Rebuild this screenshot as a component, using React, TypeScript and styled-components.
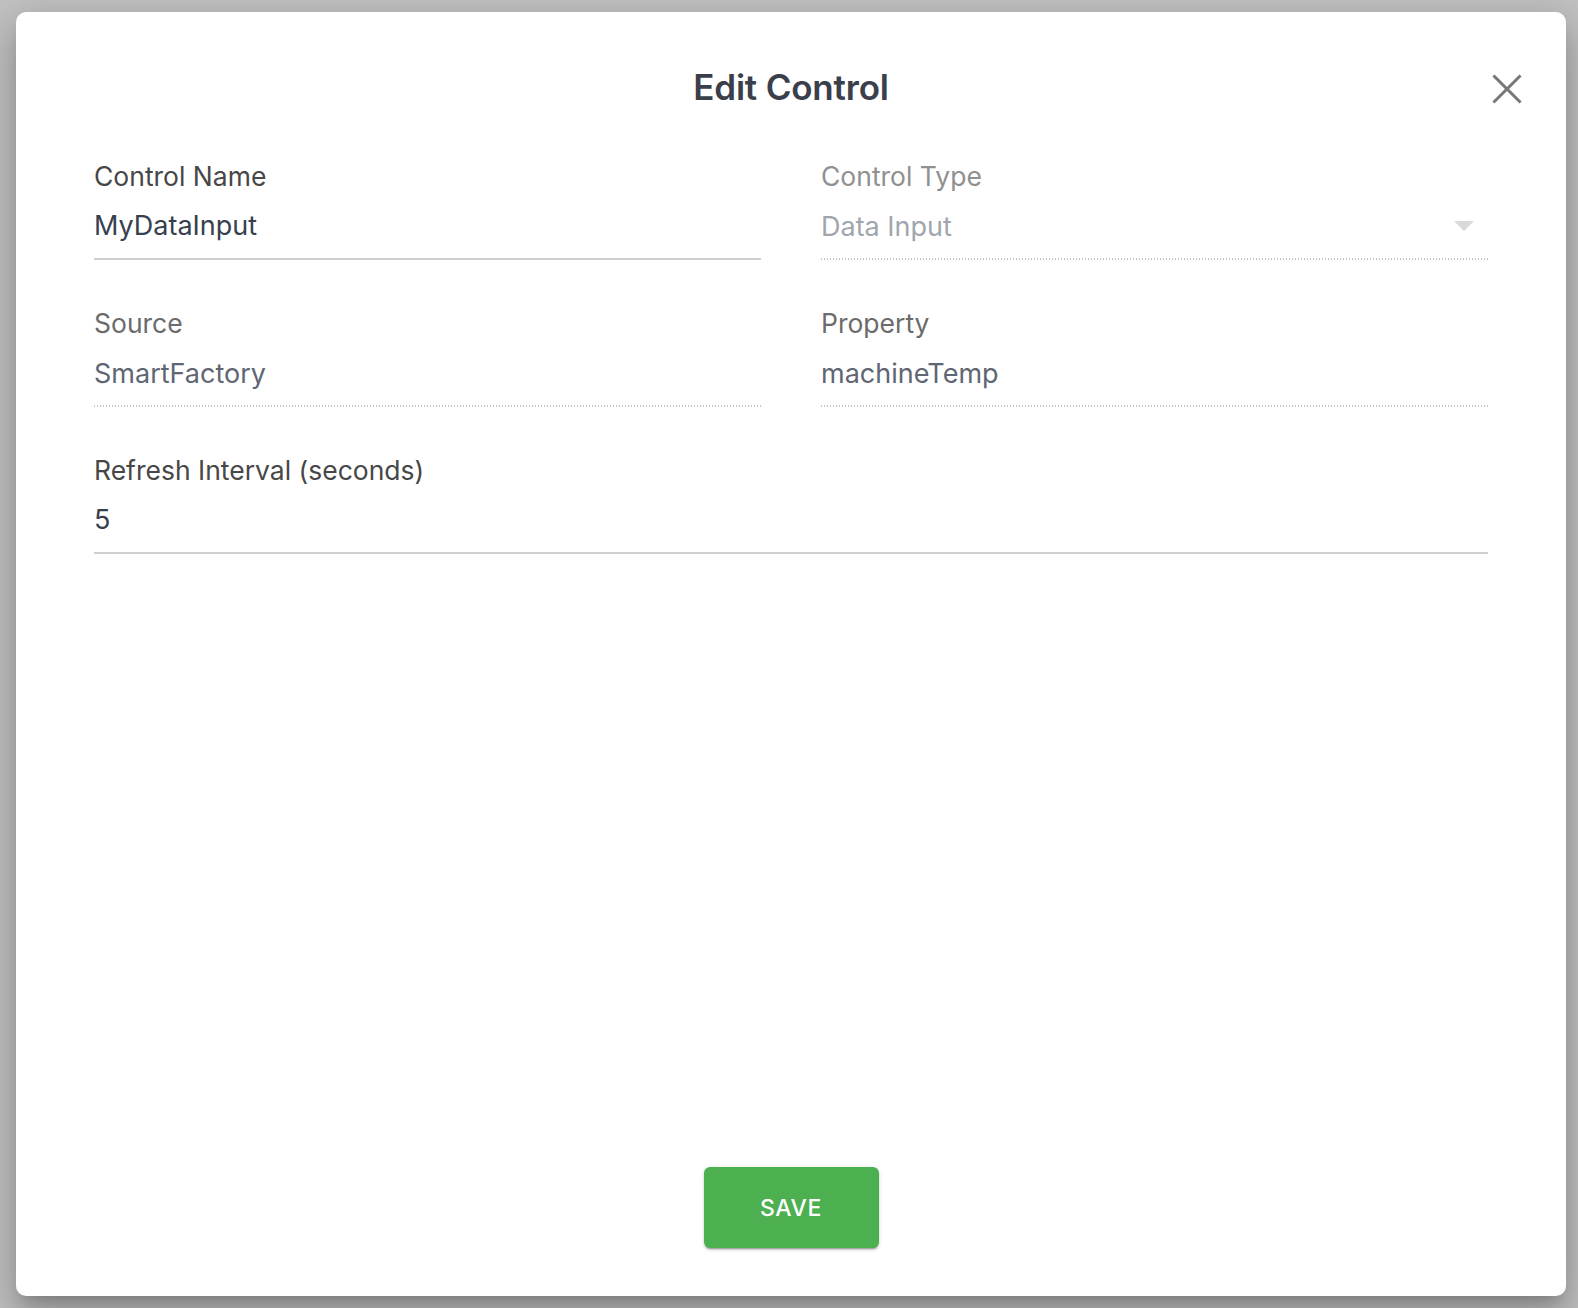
import React from 'react';
import styled, { createGlobalStyle } from 'styled-components';

const GlobalStyle = createGlobalStyle`
  html, body {
    margin: 0;
    height: 100%;
    background: #c2c2c2;
  }
  body {
    font-family: Inter, "Noto Sans", "Liberation Sans", sans-serif;
  }
  * {
    box-sizing: border-box;
  }
`;

const Dialog = styled.div`
  display: flex;
  flex-direction: column;
  height: calc(100vh - 24px);
  margin: 12px 12px 12px 16px;
  padding: 55px 0 48px;
  background: #fff;
  border-radius: 10px;
  box-shadow: 0 11px 15px -7px rgba(0, 0, 0, 0.2),
    0 24px 38px 3px rgba(0, 0, 0, 0.14),
    0 9px 46px 8px rgba(0, 0, 0, 0.12);
`;

const Header = styled.div`
  display: grid;
  grid-template-columns: 1fr auto 1fr;
  align-items: center;
  padding: 0 44px;
  height: 40px;
`;

const Title = styled.h2`
  grid-column: 2;
  margin: 0;
  font-size: 35px;
  line-height: 40px;
  font-weight: 600;
  color: #3a3f4b;
  letter-spacing: -0.2px;
`;

const CloseButton = styled.button`
  grid-column: 3;
  justify-self: end;
  display: flex;
  margin-top: 4px;
  padding: 0;
  border: none;
  background: none;
  cursor: pointer;
`;

const Form = styled.div`
  display: grid;
  grid-template-columns: 1fr 1fr;
  column-gap: 60px;
  row-gap: 47px;
  padding: 53px 78px 0;
`;

const Field = styled.div<{ $wide?: boolean }>`
  display: flex;
  flex-direction: column;
  grid-column: ${(p) => (p.$wide ? '1 / -1' : 'auto')};
`;

const Label = styled.label<{ $tone: 'active' | 'muted' | 'faint' }>`
  font-size: 26.5px;
  line-height: 32px;
  margin-bottom: 18px;
  color: ${(p) =>
    p.$tone === 'active' ? '#474747' : p.$tone === 'muted' ? '#6b6b6b' : '#909090'};
`;

const InputRow = styled.div<{ $disabled?: boolean }>`
  position: relative;
  display: flex;
  align-items: center;
  height: 50px;
  padding-bottom: 16px;
  border-bottom: ${(p) => (p.$disabled ? 'none' : '2px solid #cfcfcf')};
  background-image: ${(p) =>
    p.$disabled
      ? 'repeating-linear-gradient(to right, #c4c4c4 0 1px, transparent 1px 3px)'
      : 'none'};
  background-size: 100% 2px;
  background-position: left bottom;
  background-repeat: no-repeat;
`;

const Value = styled.input<{ $tone: 'dark' | 'mid' | 'light' }>`
  flex: 1;
  min-width: 0;
  height: 32px;
  padding: 0;
  border: none;
  outline: none;
  background: transparent;
  font-family: inherit;
  font-size: 27px;
  line-height: 32px;
  color: ${(p) => (p.$tone === 'dark' ? '#36404f' : p.$tone === 'mid' ? '#5f6673' : '#a0a5ae')};
  -webkit-text-fill-color: currentColor;
`;

const Arrow = styled.svg`
  position: absolute;
  right: 14px;
  top: 11px;
`;

const Footer = styled.div`
  display: flex;
  justify-content: center;
  margin-top: auto;
`;

const SaveButton = styled.button`
  width: 175px;
  height: 81px;
  border: none;
  border-radius: 6px;
  background: #4caf50;
  color: #fff;
  font-family: inherit;
  font-size: 23px;
  font-weight: 500;
  letter-spacing: 0.6px;
  box-shadow: 0 3px 1px -2px rgba(0, 0, 0, 0.2), 0 2px 2px 0 rgba(0, 0, 0, 0.14),
    0 1px 5px 0 rgba(0, 0, 0, 0.12);
  cursor: pointer;
`;

const CloseIcon = () => (
  <svg width="30" height="30" viewBox="0 0 30 30">
    <g stroke="#777" strokeWidth="3" strokeLinecap="square">
      <line x1="2.5" y1="2.5" x2="27.5" y2="27.5" />
      <line x1="27.5" y1="2.5" x2="2.5" y2="27.5" />
    </g>
  </svg>
);

export default function App() {
  return (
    <>
      <GlobalStyle />
      <Dialog>
        <Header>
          <Title>Edit Control</Title>
          <CloseButton aria-label="Close">
            <CloseIcon />
          </CloseButton>
        </Header>

        <Form>
          <Field>
            <Label $tone="active">Control Name</Label>
            <InputRow>
              <Value $tone="dark" defaultValue="MyDataInput" />
            </InputRow>
          </Field>

          <Field>
            <Label $tone="faint">Control Type</Label>
            <InputRow $disabled>
              <Value $tone="light" defaultValue="Data Input" disabled />
              <Arrow width="20" height="10" viewBox="0 0 20 10">
                <polygon points="0,0 20,0 10,10" fill="#d9d9d9" />
              </Arrow>
            </InputRow>
          </Field>

          <Field>
            <Label $tone="muted">Source</Label>
            <InputRow $disabled>
              <Value $tone="mid" defaultValue="SmartFactory" disabled />
            </InputRow>
          </Field>

          <Field>
            <Label $tone="muted">Property</Label>
            <InputRow $disabled>
              <Value $tone="mid" defaultValue="machineTemp" disabled />
            </InputRow>
          </Field>

          <Field $wide>
            <Label $tone="active">Refresh Interval (seconds)</Label>
            <InputRow>
              <Value $tone="dark" defaultValue="5" />
            </InputRow>
          </Field>
        </Form>

        <Footer>
          <SaveButton>SAVE</SaveButton>
        </Footer>
      </Dialog>
    </>
  );
}
